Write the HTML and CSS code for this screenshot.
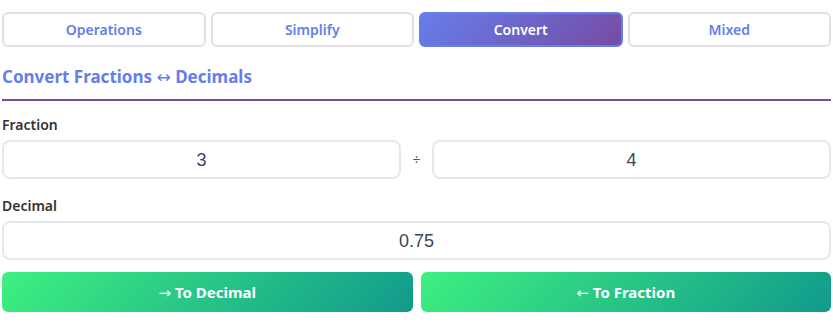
FILE: index.html
```html
<!DOCTYPE html>
<html lang="en">
<head>
<meta charset="utf-8">
<title>Fraction Converter</title>
<link rel="stylesheet" href="styles.css">
</head>
<body>
<div class="app">
  <nav class="tabs">
    <button class="tab">Operations</button>
    <button class="tab">Simplify</button>
    <button class="tab active">Convert</button>
    <button class="tab">Mixed</button>
  </nav>
  <h2 class="title">Convert Fractions <span class="arrow">↔</span> Decimals</h2>
  <label class="label">Fraction</label>
  <div class="frac-row">
    <input class="field" type="text" value="3">
    <span class="div-sign">÷</span>
    <input class="field" type="text" value="4">
  </div>
  <label class="label">Decimal</label>
  <input class="field full" type="text" value="0.75">
  <div class="actions">
    <button class="action"><span class="arrow">→</span> To Decimal</button>
    <button class="action"><span class="arrow">←</span> To Fraction</button>
  </div>
</div>
</body>
</html>
```
FILE: styles.css
```css
* { box-sizing: border-box; }
html, body { margin: 0; background: #fff; }
body { font-family: "Noto Sans", "Open Sans", sans-serif; }
.app { padding: 12px 2px 0 2px; width: 833px; }
.tabs {
  display: grid;
  grid-template-columns: repeat(4, 1fr);
  gap: 5px;
}
.tab {
  height: 35px;
  border: 2px solid #e0e0e0;
  border-radius: 6px;
  background: #fff;
  color: #667eea;
  font-family: "Noto Sans", sans-serif;
  font-weight: 600;
  font-size: 14px;
  padding: 0;
}
.tab.active {
  background: linear-gradient(135deg, #667eea 0%, #764ba2 100%);
  border-color: #667eea;
  color: #fff;
}
.title {
  margin: 17px 0 0 0;
  padding-bottom: 10px;
  border-bottom: 2px solid #764ba2;
  color: #667eea;
  font-size: 17px;
  line-height: 25px;
  font-weight: 700;
}
.arrow {
  font-family: "DejaVu Sans", sans-serif;
  font-weight: 400;
  font-size: 1em;
  line-height: 1;
}
.label {
  display: block;
  margin: 14px 0 5px 0;
  color: #333;
  font-size: 14px;
  line-height: 20px;
  font-weight: 600;
}
.frac-row {
  display: grid;
  grid-template-columns: 1fr auto 1fr;
  gap: 11px;
  align-items: center;
  padding-bottom: 3px;
}
.div-sign {
  width: 9px;
  text-align: center;
  color: #555;
  font-size: 14px;
}
.field {
  height: 39px;
  width: 100%;
  border: 2px solid #e2e8f0;
  border-radius: 8px;
  background: #fff;
  text-align: center;
  font-family: "Liberation Sans", Arial, sans-serif;
  font-size: 18px;
  color: #3b4658;
  padding: 2px 10px 0 10px;
  display: block;
}
.actions {
  margin-top: 12px;
  display: grid;
  grid-template-columns: 1fr 1fr;
  gap: 8px;
}
.action {
  height: 40px;
  border: none;
  border-radius: 6px;
  background: linear-gradient(135deg, #3ef080 0%, #119a8c 100%);
  color: #fff;
  font-family: "Noto Sans", sans-serif;
  font-weight: 700;
  font-size: 15px;
  padding: 0;
}
```
